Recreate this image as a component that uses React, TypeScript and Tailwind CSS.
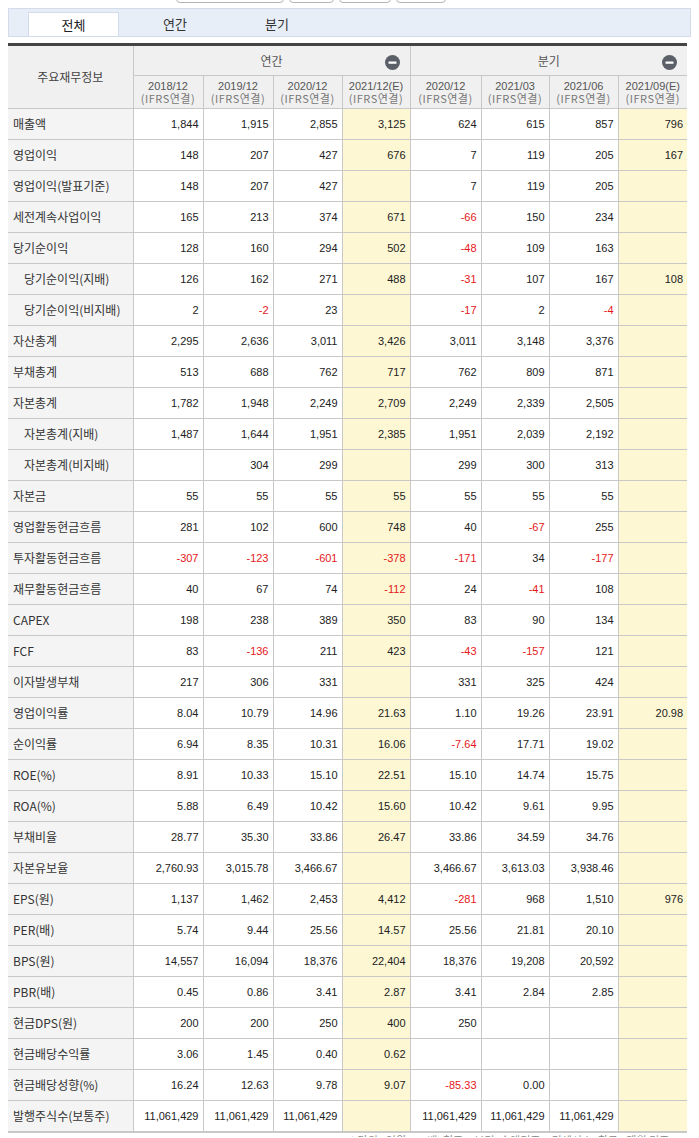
import React from "react"

type Row = { label: string; indent?: boolean; values: string[] }

const rows: Row[] = [
  { label: "매출액", values: ["1,844", "1,915", "2,855", "3,125", "624", "615", "857", "796"] },
  { label: "영업이익", values: ["148", "207", "427", "676", "7", "119", "205", "167"] },
  { label: "영업이익(발표기준)", values: ["148", "207", "427", "", "7", "119", "205", ""] },
  { label: "세전계속사업이익", values: ["165", "213", "374", "671", "-66", "150", "234", ""] },
  { label: "당기순이익", values: ["128", "160", "294", "502", "-48", "109", "163", ""] },
  { label: "당기순이익(지배)", indent: true, values: ["126", "162", "271", "488", "-31", "107", "167", "108"] },
  { label: "당기순이익(비지배)", indent: true, values: ["2", "-2", "23", "", "-17", "2", "-4", ""] },
  { label: "자산총계", values: ["2,295", "2,636", "3,011", "3,426", "3,011", "3,148", "3,376", ""] },
  { label: "부채총계", values: ["513", "688", "762", "717", "762", "809", "871", ""] },
  { label: "자본총계", values: ["1,782", "1,948", "2,249", "2,709", "2,249", "2,339", "2,505", ""] },
  { label: "자본총계(지배)", indent: true, values: ["1,487", "1,644", "1,951", "2,385", "1,951", "2,039", "2,192", ""] },
  { label: "자본총계(비지배)", indent: true, values: ["", "304", "299", "", "299", "300", "313", ""] },
  { label: "자본금", values: ["55", "55", "55", "55", "55", "55", "55", ""] },
  { label: "영업활동현금흐름", values: ["281", "102", "600", "748", "40", "-67", "255", ""] },
  { label: "투자활동현금흐름", values: ["-307", "-123", "-601", "-378", "-171", "34", "-177", ""] },
  { label: "재무활동현금흐름", values: ["40", "67", "74", "-112", "24", "-41", "108", ""] },
  { label: "CAPEX", values: ["198", "238", "389", "350", "83", "90", "134", ""] },
  { label: "FCF", values: ["83", "-136", "211", "423", "-43", "-157", "121", ""] },
  { label: "이자발생부채", values: ["217", "306", "331", "", "331", "325", "424", ""] },
  { label: "영업이익률", values: ["8.04", "10.79", "14.96", "21.63", "1.10", "19.26", "23.91", "20.98"] },
  { label: "순이익률", values: ["6.94", "8.35", "10.31", "16.06", "-7.64", "17.71", "19.02", ""] },
  { label: "ROE(%)", values: ["8.91", "10.33", "15.10", "22.51", "15.10", "14.74", "15.75", ""] },
  { label: "ROA(%)", values: ["5.88", "6.49", "10.42", "15.60", "10.42", "9.61", "9.95", ""] },
  { label: "부채비율", values: ["28.77", "35.30", "33.86", "26.47", "33.86", "34.59", "34.76", ""] },
  { label: "자본유보율", values: ["2,760.93", "3,015.78", "3,466.67", "", "3,466.67", "3,613.03", "3,938.46", ""] },
  { label: "EPS(원)", values: ["1,137", "1,462", "2,453", "4,412", "-281", "968", "1,510", "976"] },
  { label: "PER(배)", values: ["5.74", "9.44", "25.56", "14.57", "25.56", "21.81", "20.10", ""] },
  { label: "BPS(원)", values: ["14,557", "16,094", "18,376", "22,404", "18,376", "19,208", "20,592", ""] },
  { label: "PBR(배)", values: ["0.45", "0.86", "3.41", "2.87", "3.41", "2.84", "2.85", ""] },
  { label: "현금DPS(원)", values: ["200", "200", "250", "400", "250", "", "", ""] },
  { label: "현금배당수익률", values: ["3.06", "1.45", "0.40", "0.62", "", "", "", ""] },
  { label: "현금배당성향(%)", values: ["16.24", "12.63", "9.78", "9.07", "-85.33", "0.00", "", ""] },
  { label: "발행주식수(보통주)", values: ["11,061,429", "11,061,429", "11,061,429", "", "11,061,429", "11,061,429", "11,061,429", ""] },
]

const periods = ["2018/12", "2019/12", "2020/12", "2021/12(E)", "2020/12", "2021/03", "2021/06", "2021/09(E)"]
const estimate = [false, false, false, true, false, false, false, true]

function MinusIcon() {
  return (
    <svg width="15" height="15" viewBox="0 0 15 15" className="block">
      <circle cx="7.5" cy="7.5" r="7.5" fill="#5b6068" />
      <rect x="3.5" y="6.5" width="8" height="2.2" rx="0.5" fill="#ffffff" />
    </svg>
  )
}

const kr = { fontFamily: '"Noto Sans CJK KR", "Liberation Sans", sans-serif' }
const num = { fontFamily: '"Liberation Sans", "Noto Sans CJK KR", sans-serif' }

export default function App() {
  return (
    <div className="w-[699px] bg-white text-[#333]" style={kr}>
      {/* cut off toolbar above the tabs */}
      <div className="h-[4px] overflow-hidden">
        <div className="-mt-[20px] flex items-start pl-[176px] gap-[5px]">
          <div className="h-[23px] w-[108px] rounded-[4px] border border-[#b5b5b5]" />
          <div className="h-[23px] w-[45px] rounded-[4px] border border-[#b5b5b5]" />
          <div className="h-[23px] w-[52px] rounded-[4px] border border-[#b5b5b5]" />
          <div className="h-[23px] w-[50px] rounded-[4px] border border-[#b5b5b5]" />
        </div>
      </div>

      {/* tabs */}
      <div className="mx-2 mt-[4px] flex h-[29px] items-end border border-[#d3dcea] bg-[#e8eef8] pl-[19px]">
        <div className="flex h-[24px] w-[91px] items-center justify-center border border-b-0 border-[#d3dcea] bg-white text-[13px] text-[#222]">
          전체
        </div>
        <div className="flex h-[24px] w-[112px] items-center justify-center text-[13px] text-[#333]">연간</div>
        <div className="flex h-[24px] w-[92px] items-center justify-center text-[13px] text-[#333]">분기</div>
      </div>

      {/* table */}
      <div className="mx-2 mt-[6px]">
        <table className="w-[679px] table-fixed border-collapse border-t-[3px] border-b-2 border-t-[#444] border-b-[#c8c8c8]">
          <colgroup>
            <col className="w-[125px]" />
            <col className="w-[70px]" />
            <col className="w-[70px]" />
            <col className="w-[69px]" />
            <col className="w-[68px]" />
            <col className="w-[71px]" />
            <col className="w-[68px]" />
            <col className="w-[69px]" />
            <col className="w-[69px]" />
          </colgroup>
          <thead>
            <tr className="h-[30px]">
              <th rowSpan={2} className="border border-l-0 border-[#c8c8c8] bg-[#f0f0f0] text-[12px] font-normal text-[#444]">
                주요재무정보
              </th>
              <th colSpan={4} className="border border-[#c8c8c8] bg-[#f0f0f0] p-0 text-[12px] font-normal text-[#555]">
                <div className="relative flex h-[29px] items-center justify-center">
                  연간
                  <span className="absolute right-[10px] top-[9px]">
                    <MinusIcon />
                  </span>
                </div>
              </th>
              <th colSpan={4} className="border border-r-0 border-[#c8c8c8] bg-[#f0f0f0] p-0 text-[12px] font-normal text-[#555]">
                <div className="relative flex h-[29px] items-center justify-center">
                  분기
                  <span className="absolute right-[10px] top-[9px]">
                    <MinusIcon />
                  </span>
                </div>
              </th>
            </tr>
            <tr className="h-[33px]">
              {periods.map((p, i) => (
                <th
                  key={i}
                  className={`border border-[#c8c8c8] bg-[#f0f0f0] p-0 text-center text-[11px] font-normal leading-[12px] text-[#555] ${i === 7 ? "border-r-0" : ""}`}
                >
                  <div style={num}>{p}</div>
                  <div className="tracking-[0.5px] text-[#777]">(IFRS연결)</div>
                </th>
              ))}
            </tr>
          </thead>
          <tbody>
            {rows.map((r) => (
              <tr key={r.label} className="h-[31px]">
                <td
                  className={`border border-l-0 border-[#c8c8c8] bg-[#f4f4f4] text-[12px] text-[#333] ${r.indent ? "pl-[16px]" : "pl-[5px]"}`}
                >
                  {r.label}
                </td>
                {r.values.map((v, i) => (
                  <td
                    key={i}
                    style={num}
                    className={`border border-[#c8c8c8] pr-[4px] text-right text-[11px] ${i === 7 ? "border-r-0" : ""} ${estimate[i] ? "bg-[#fdf7d3]" : "bg-white"} ${v.startsWith("-") ? "text-[#e4171b]" : "text-[#222]"}`}
                  >
                    {v}
                  </td>
                ))}
              </tr>
            ))}
          </tbody>
        </table>
        <div className="h-[4px] overflow-hidden">
          <p className="pl-[342px] pt-[1px] text-[11px] leading-[13px] text-[#888]">
            * 단위 : 억원, %, 배, 천주 · 분기: 순액기준 · 컨센서스: 최근 3개월 기준
          </p>
        </div>
      </div>
    </div>
  )
}
